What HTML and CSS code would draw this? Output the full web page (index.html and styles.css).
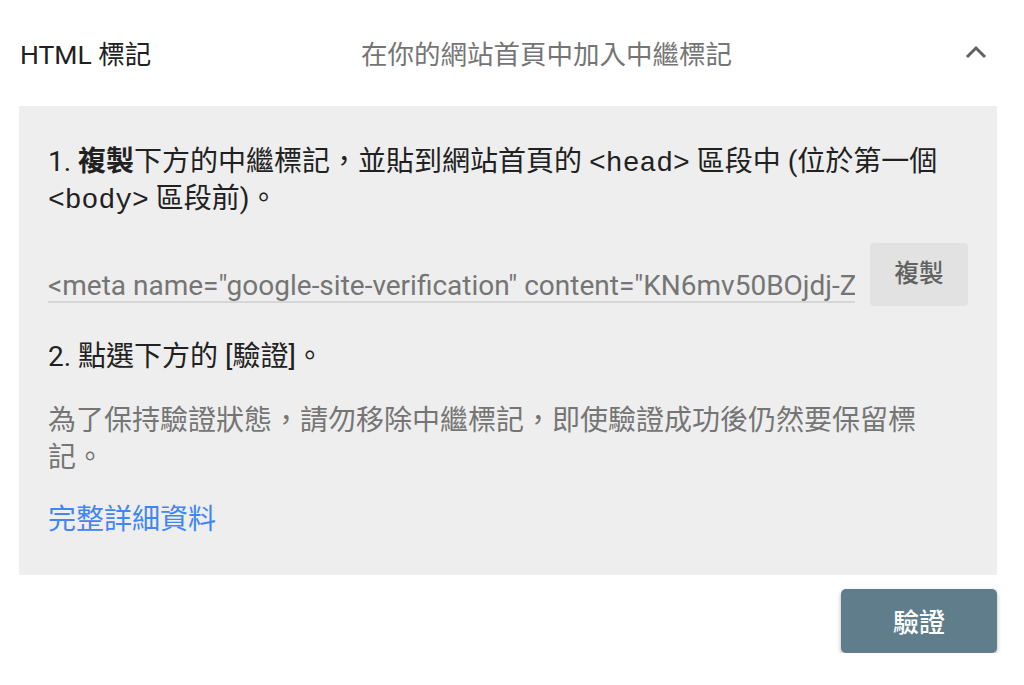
FILE: index.html
```html
<!DOCTYPE html>
<html lang="zh-Hant">
<head>
<meta charset="utf-8">
<link rel="stylesheet" href="styles.css">
</head>
<body>
<div class="page">
  <div class="header">
    <div class="title">HTML 標記</div>
    <div class="desc">在你的網站首頁中加入中繼標記</div>
    <svg class="chevron" width="22" height="14" viewBox="0 0 22 14"><path d="M2 12 L11 3 L20 12" fill="none" stroke="#616161" stroke-width="3"/></svg>
  </div>
  <div class="panel">
    <p class="step">1. <b>複製</b>下方的中繼標記，並貼到網站首頁的 <span class="mono">&lt;head&gt;</span> 區段中 (位於第一個 <span class="mono">&lt;body&gt;</span> 區段前)。</p>
    <div class="copy-row">
      <input class="field" type="text" readonly value="&lt;meta name=&quot;google-site-verification&quot; content=&quot;KN6mv50BOjdj-ZxQ7pLw&quot; /&gt;">
      <button class="copy-btn">複製</button>
    </div>
    <p class="step step2">2. 點選下方的 [驗證]。</p>
    <p class="note">為了保持驗證狀態，請勿移除中繼標記，即使驗證成功後仍然要保留標記。</p>
    <a class="link" href="#">完整詳細資料</a>
  </div>
  <div class="actions">
    <button class="verify-btn">驗證</button>
  </div>
</div>
</body>
</html>
```
FILE: styles.css
```css
* { box-sizing: border-box; }
html, body { margin: 0; padding: 0; background: #ffffff; }
body {
  font-family: Roboto, "Noto Sans CJK TC", sans-serif;
  color: #212121;
}
.page {
  width: 1024px;
  padding: 0 27px 0 19px;
}
.header {
  display: grid;
  grid-template-columns: 341px 1fr auto;
  align-items: center;
  height: 106px;
  padding: 0 0 0 1px;
}
.title {
  font-size: 26.5px;
  color: #212121;
  padding-bottom: 2px;
}
.desc {
  font-size: 26.5px;
  color: #757575;
  padding-bottom: 2px;
}
.chevron {
  display: block;
  margin-right: 10px;
  margin-bottom: 2px;
}
.panel {
  background: #eeeeee;
  padding: 37px 29px 0 29px;
  height: 469px;
}
.step {
  margin: 0;
  font-size: 28px;
  line-height: 37px;
  color: #212121;
}
.step b { font-weight: 700; }
.mono {
  font-family: "Liberation Mono", "Courier New", monospace;
  font-size: 28px;
  line-height: 1;
}
.copy-row {
  display: flex;
  align-items: flex-start;
  gap: 15px;
  margin-top: 26px;
}
.field {
  flex: 1;
  min-width: 0;
  display: block;
  margin: 0;
  border: none;
  border-bottom: 2px solid #d6d6d6;
  border-radius: 0;
  background: transparent;
  outline: none;
  height: 60px;
  padding: 27px 0 1px;
  font-family: Roboto, "Noto Sans CJK TC", sans-serif;
  font-size: 28px;
  color: #757575;
  line-height: 30px;
}
.copy-btn {
  flex: none;
  width: 98px;
  height: 63px;
  border: none;
  border-radius: 4px;
  background: #e2e2e2;
  color: #616161;
  font-family: Roboto, "Noto Sans CJK TC", sans-serif;
  font-size: 24.5px;
  font-weight: 500;
  padding: 0 0 6px;
}
.step2 { margin-top: 32px; }
.note {
  margin: 27px 0 0;
  font-size: 28px;
  line-height: 37px;
  color: #757575;
}
.link {
  display: block;
  width: max-content;
  margin-top: 25px;
  font-size: 28px;
  line-height: 37px;
  color: #4285f4;
  text-decoration: none;
}
.actions {
  display: flex;
  justify-content: flex-end;
  padding-top: 14px;
}
.verify-btn {
  width: 156px;
  height: 64px;
  border: none;
  border-radius: 5px;
  background: #607d8b;
  color: #ffffff;
  font-family: Roboto, "Noto Sans CJK TC", sans-serif;
  font-size: 26px;
  font-weight: 500;
  box-shadow: 0 2px 4px rgba(0,0,0,0.3);
  padding: 0 0 2px;
}
```
